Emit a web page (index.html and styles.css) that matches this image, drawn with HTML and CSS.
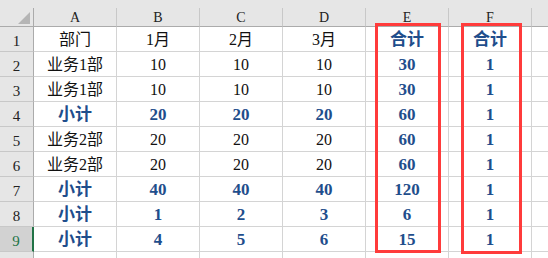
FILE: index.html
```html
<!DOCTYPE html>
<html>
<head>
<meta charset="utf-8">
<link rel="stylesheet" href="styles.css">
</head>
<body>
<div class="sheet">
  <div class="topstrip"></div>
  <div class="grid">
    <div class="corner"><span class="tri"></span></div>
    <div class="colhead">A</div>
    <div class="colhead">B</div>
    <div class="colhead">C</div>
    <div class="colhead">D</div>
    <div class="colhead">E</div>
    <div class="colhead">F</div>
    <div class="colhead last"></div>

    <div class="rowhead">1</div>
    <div class="cell">部门</div><div class="cell">1月</div><div class="cell">2月</div><div class="cell">3月</div><div class="cell b">合计</div><div class="cell b">合计</div><div class="cell"></div>

    <div class="rowhead">2</div>
    <div class="cell">业务1部</div><div class="cell">10</div><div class="cell">10</div><div class="cell">10</div><div class="cell b">30</div><div class="cell b">1</div><div class="cell"></div>

    <div class="rowhead">3</div>
    <div class="cell">业务1部</div><div class="cell">10</div><div class="cell">10</div><div class="cell">10</div><div class="cell b">30</div><div class="cell b">1</div><div class="cell"></div>

    <div class="rowhead">4</div>
    <div class="cell b">小计</div><div class="cell b">20</div><div class="cell b">20</div><div class="cell b">20</div><div class="cell b">60</div><div class="cell b">1</div><div class="cell"></div>

    <div class="rowhead">5</div>
    <div class="cell">业务2部</div><div class="cell">20</div><div class="cell">20</div><div class="cell">20</div><div class="cell b">60</div><div class="cell b">1</div><div class="cell"></div>

    <div class="rowhead">6</div>
    <div class="cell">业务2部</div><div class="cell">20</div><div class="cell">20</div><div class="cell">20</div><div class="cell b">60</div><div class="cell b">1</div><div class="cell"></div>

    <div class="rowhead">7</div>
    <div class="cell b">小计</div><div class="cell b">40</div><div class="cell b">40</div><div class="cell b">40</div><div class="cell b">120</div><div class="cell b">1</div><div class="cell"></div>

    <div class="rowhead">8</div>
    <div class="cell b">小计</div><div class="cell b">1</div><div class="cell b">2</div><div class="cell b">3</div><div class="cell b">6</div><div class="cell b">1</div><div class="cell"></div>

    <div class="rowhead sel">9</div>
    <div class="cell b">小计</div><div class="cell b">4</div><div class="cell b">5</div><div class="cell b">6</div><div class="cell b">15</div><div class="cell b">1</div><div class="cell"></div>

    <div class="rowhead"></div>
    <div class="cell"></div><div class="cell"></div><div class="cell"></div><div class="cell"></div><div class="cell"></div><div class="cell"></div><div class="cell"></div>
  </div>
  <div class="box box-e"></div>
  <div class="box box-f"></div>
</div>
</body>
</html>
```
FILE: styles.css
```css
* { box-sizing: border-box; }
html, body { margin: 0; padding: 0; background: #fff; }
body { width: 548px; height: 258px; overflow: hidden; }

.sheet {
  position: relative;
  width: 548px;
  height: 258px;
  overflow: hidden;
  font-family: "Liberation Serif", "Noto Sans CJK SC", serif;
}

.topstrip { height: 8px; background: #e6e6e6; }

.grid {
  display: grid;
  grid-template-columns: 34px 83px 83px 83px 83px 83px 83px 40px;
  grid-template-rows: 19px repeat(10, 25px);
}

.corner {
  background: #e6e6e6;
  border-right: 1px solid #ababab;
  border-bottom: 1px solid #ababab;
  position: relative;
}
.tri {
  position: absolute;
  right: 3px;
  bottom: 2px;
  width: 0; height: 0;
  border-left: 12px solid transparent;
  border-bottom: 12px solid #b5b5b5;
}

.colhead {
  background: #e6e6e6;
  border-right: 1px solid #c8c8c8;
  border-bottom: 1px solid #ababab;
  display: flex;
  align-items: flex-end;
  justify-content: center;
  font-size: 14px;
  line-height: 14px;
  padding-bottom: 1px;
  color: #222;
}

.rowhead {
  background: #e6e6e6;
  border-right: 1px solid #ababab;
  border-bottom: 1px solid #c8c8c8;
  display: flex;
  align-items: flex-end;
  justify-content: center;
  font-size: 15px;
  line-height: 16px;
  padding-bottom: 2px;
  color: #222;
}
.rowhead.sel {
  background: #d2d2d2;
  color: #217346;
  border-right: 2px solid #217346;
}

.cell {
  border-right: 1px solid #d4d4d4;
  border-bottom: 1px solid #d4d4d4;
  display: flex;
  align-items: flex-end;
  justify-content: center;
  font-size: 16px;
  line-height: 18px;
  padding-bottom: 2px;
  color: #111;
  white-space: nowrap;
}
.cell.b {
  color: #1f4e8c;
  font-weight: bold;
  font-size: 17px;
}

.box {
  position: absolute;
  border: 3px solid #ff3b3b;
}
.box-e { left: 375px; top: 23px; width: 66px; height: 230px; }
.box-f { left: 461px; top: 23px; width: 61px; height: 231px; }
```
